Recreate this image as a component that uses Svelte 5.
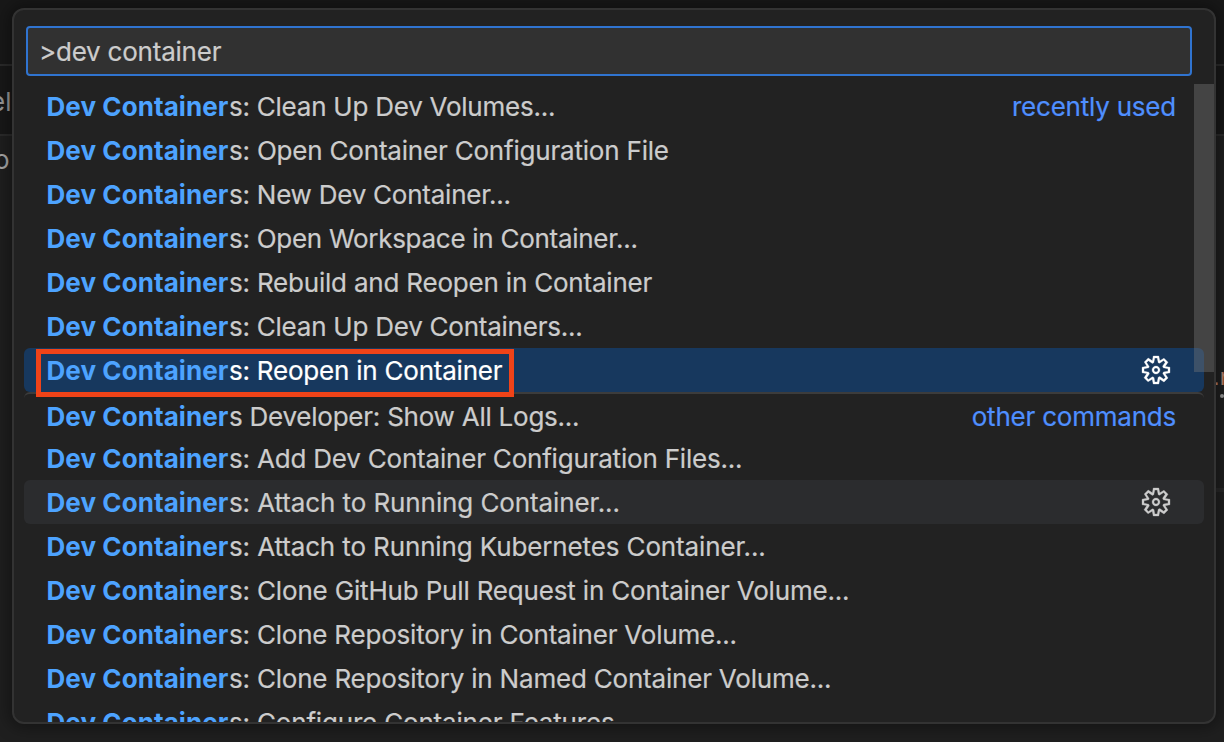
<script>
  const recent = [
    ['Clean Up Dev Volumes...', -0.24],
    ['Open Container Configuration File', -0.2],
    ['New Dev Container...', -0.24],
    ['Open Workspace in Container...', -0.28],
    ['Rebuild and Reopen in Container', -0.2],
    ['Clean Up Dev Containers...', -0.24],
    ['Reopen in Container', -0.22]
  ];
  const other = [
    ['Add Dev Container Configuration Files...', -0.2],
    ['Attach to Running Container...', -0.1],
    ['Attach to Running Kubernetes Container...', -0.13],
    ['Clone GitHub Pull Request in Container Volume...', -0.17],
    ['Clone Repository in Container Volume...', -0.21],
    ['Clone Repository in Named Container Volume...', -0.2],
    ['Configure Container Features...', -0.18]
  ];
  const rows = [
    ...recent.map(([t, tracking], i) => ({ text: 's: ' + t, tracking, tag: i === 0 ? 'recently used' : '', selected: i === 6 })),
    { text: 's Developer: Show All Logs...', tracking: -0.24, tag: 'other commands', separator: true },
    ...other.map(([t, tracking], i) => ({ text: 's: ' + t, tracking, hovered: i === 1 }))
  ];
</script>

<main>
  <div class="title"></div>
  <div class="tabs">el</div>
  <div class="editor"><span class="crumb">o</span></div>
  <span class="code">.r</span><span class="dot"></span>
  <div class="line"></div>
  <section class="palette">
    <div class="field">&gt;dev container</div>
    <div class="list">
      {#each rows as row}
        <div class="row" class:selected={row.selected} class:hovered={row.hovered} class:separator={row.separator}>
          <b>Dev Container</b><span class="label" style:letter-spacing="{row.tracking}px">{row.text}</span>
          {#if row.tag}<span class="tag">{row.tag}</span>{/if}
          {#if row.selected || row.hovered}
            <svg class="gear" viewBox="0 0 16 16" width="32" height="32"><path fill="currentColor" stroke="currentColor" stroke-width=".15" fill-rule="evenodd" d="M9.1 4.4L8.6 2H7.4l-.5 2.4-.7.3-2-1.3-.9.8 1.3 2-.2.7-2.4.5v1.2l2.4.5.3.8-1.3 2 .8.8 2-1.3.8.3.4 2.3h1.2l.5-2.4.8-.3 2 1.3.8-.8-1.3-2 .3-.8 2.3-.4V7.4l-2.4-.5-.3-.8 1.3-2-.8-.8-2 1.3-.7-.2zM9.4 1l.5 2.4L12 2.1l2 2-1.4 2.1 2.4.4v2.8l-2.4.5L14 12l-2 2-2.1-1.4-.5 2.4H6.6l-.5-2.4L4 13.9l-2-2 1.4-2.1L1 9.4V6.6l2.4-.5L2.1 4l2-2 2.1 1.4.4-2.4h2.8zm.6 7c0 1.1-.9 2-2 2s-2-.9-2-2 .9-2 2-2 2 .9 2 2zM8 9c.6 0 1-.4 1-1s-.4-1-1-1-1 .4-1 1 .4 1 1 1z" /></svg>
          {/if}
        </div>
      {/each}
    </div>
    <div class="scrollbar"></div>
  </section>
  <div class="callout"></div>
</main>

<style>
  :global(body) { background: #1f1f1f; }
  main { position: relative; box-sizing: border-box; width: 1224px; height: 742px; overflow: hidden; font: 26px/44px Inter, sans-serif; color: #ccc; background: #1f1f1f; }
  .title { height: 64px; background: #181818; border-bottom: 2px solid #2b2b2b; }
  .tabs { height: 68px; background: #181818; border-bottom: 2px solid #2b2b2b; line-height: 72px; color: #999; text-indent: -10px; }
  .editor { height: 606px; line-height: 48px; color: #aaa; }
  .crumb { margin-left: -6px; }
  .code { position: absolute; left: 1213px; top: 355px; color: #b5806a; font: 24px/44px "Liberation Sans", sans-serif; }
  .dot { position: absolute; left: 1220px; top: 394px; width: 4px; height: 4px; border-radius: 2px; background: #999; }
  .line { position: absolute; left: 1216px; top: 488px; width: 8px; height: 4px; background: #282828; }
  .palette { position: absolute; left: 12px; top: 8px; box-sizing: border-box; width: 1204px; height: 716px; padding: 16px 10px 0; border: 2px solid #333; border-radius: 12px; background: #222; box-shadow: 0 0 16px 4px rgba(0, 0, 0, .36); overflow: hidden; }
  .field { box-sizing: border-box; width: 1166px; height: 50px; margin-left: 2px; padding-left: 11px; border: 2px solid #3074d0; border-radius: 4px; background: #313131; line-height: 48px; letter-spacing: -.22px; -webkit-text-stroke: .2px currentColor; }
  .list { margin-top: 8px; }
  .row { display: flex; box-sizing: border-box; width: 1180px; height: 44px; padding: 0 28px 0 22.5px; border-radius: 6px; white-space: pre; line-height: 45px; }
  b { flex: none; width: 182.5px; font-weight: 700; letter-spacing: .08px; color: #4da3ff; }
  .label, .tag { -webkit-text-stroke: .2px currentColor; }
  .tag { margin-left: auto; letter-spacing: -.22px; color: #4f8fff; }
  .gear { margin: 6px 4px 0 auto; }
  .selected { background: #17385e; color: #fff; }
  .hovered { background: #2b2c2e; }
  .separator { border-top: 2px solid #3c3c3c; }
  .scrollbar { position: absolute; left: 1180px; top: 74px; width: 20px; height: 288px; background: rgba(121, 121, 121, .4); }
  .callout { position: absolute; left: 36px; top: 349px; box-sizing: border-box; width: 478px; height: 48px; border: 5px solid #f04318; }
</style>
